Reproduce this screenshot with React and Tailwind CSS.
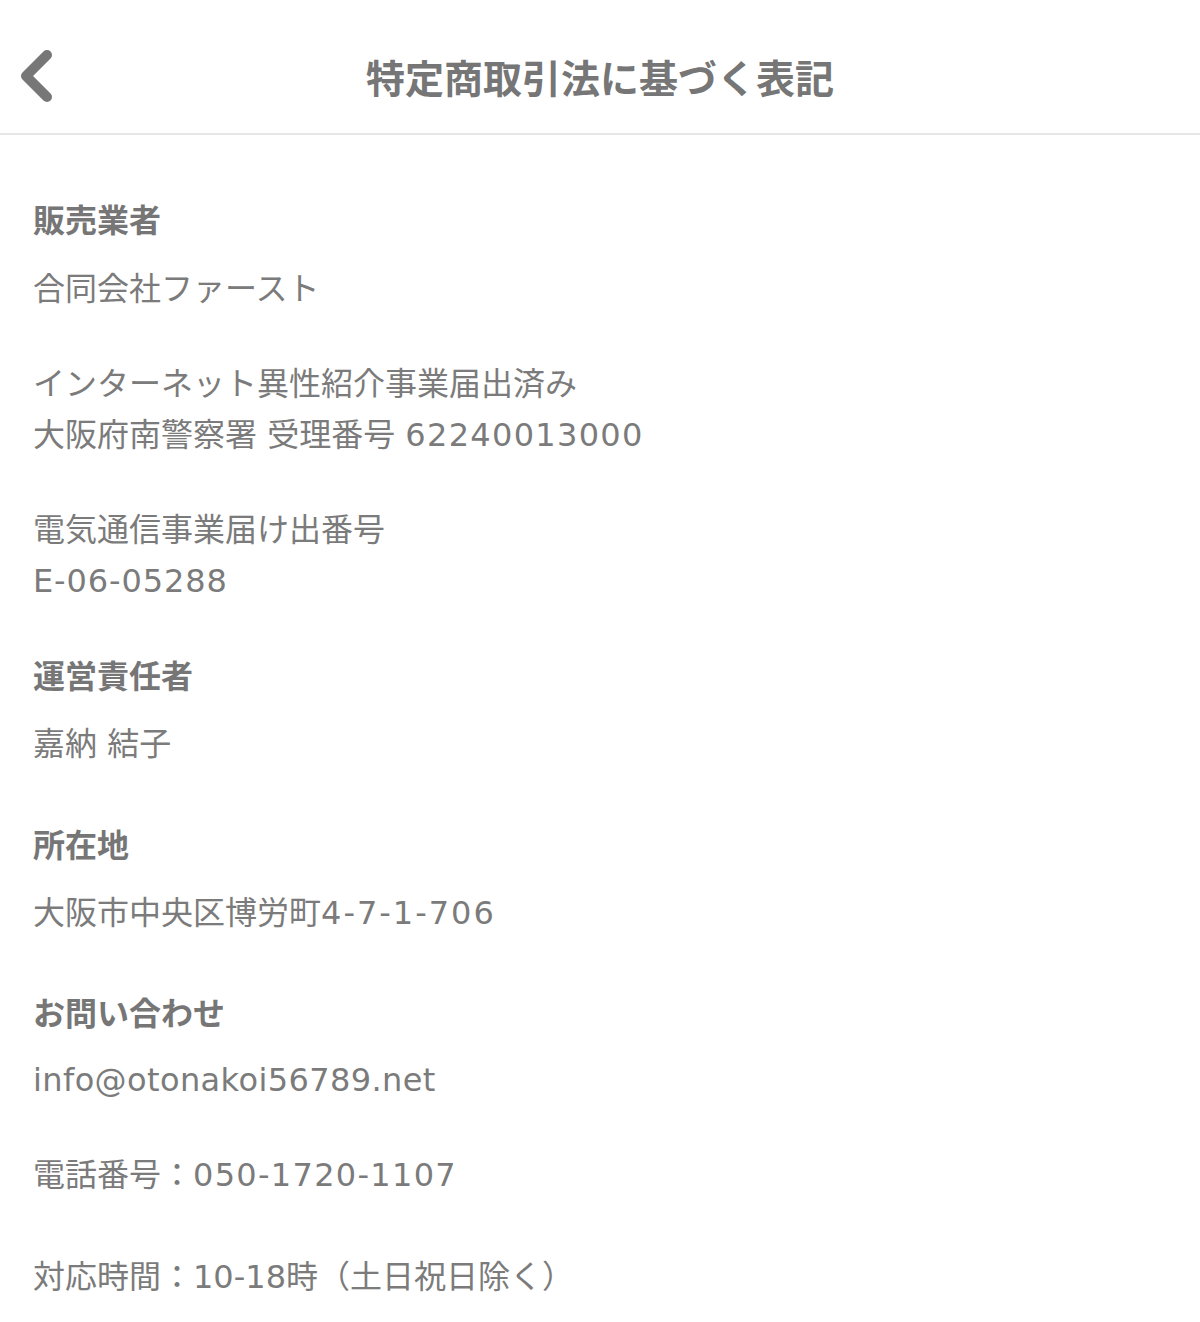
import React from "react";

const font = { fontFamily: '"Noto Sans CJK JP", "Noto Sans", sans-serif' };
const bodyFont = { fontFamily: '"DejaVu Sans", "Noto Sans CJK JP", sans-serif' };

function H({ children, className = "" }) {
  return (
    <h2 className={`text-[32px] leading-[51px] font-bold text-[#767676] ${className}`}>
      {children}
    </h2>
  );
}

function P({ children, className = "" }) {
  return (
    <p className={`text-[32px] leading-[51px] text-[#7b7b7b] ${className}`} style={bodyFont}>
      {children}
    </p>
  );
}

function N({ children }) {
  return <span className="tracking-[1.3px]">{children}</span>;
}

export default function App() {
  return (
    <div className="w-[1200px] min-h-[1322px] bg-white" style={font}>
      <header className="relative h-[135px] border-b-2 border-[#e8e5e7] flex items-center justify-center">
        <button className="absolute left-[17px] top-[49px] w-[40px] h-[54px] flex items-center justify-center">
          <svg width="40" height="54" viewBox="0 0 40 54">
            <path
              d="M30 6 L9 27 L30 48"
              fill="none"
              stroke="#777777"
              strokeWidth="10"
              strokeLinecap="round"
              strokeLinejoin="round"
            />
          </svg>
        </button>
        <h1 className="text-[39px] font-bold text-[#767676] pt-[20px]">
          特定商取引法に基づく表記
        </h1>
      </header>

      <main className="px-[33px] pt-[58px] pb-[20px]">
        <H>販売業者</H>
        <P className="mt-[20px]">合同会社ファースト</P>
        <P className="mt-[44px]">
          インターネット異性紹介事業届出済み
          <br />
          大阪府南警察署 受理番号 <N>62240013000</N>
        </P>
        <P className="mt-[44px]">
          電気通信事業届け出番号
          <br />
          <span className="tracking-[0.9px]">E-06-05288</span>
        </P>

        <H className="mt-[42px]">運営責任者</H>
        <P className="mt-[19px]">嘉納 結子</P>

        <H className="mt-[48px]">所在地</H>
        <P className="mt-[19px]">
          大阪市中央区博労町<span className="tracking-[2px]">4-7-1-706</span>
        </P>

        <H className="mt-[47px]">お問い合わせ</H>
        <P className="mt-[18px]">
          <span className="tracking-[0.4px]">info@otonakoi56789.net</span>
        </P>
        <P className="mt-[44px]">
          電話番号：<N>050-1720-1107</N>
        </P>
        <P className="mt-[51px]">対応時間：10-18時（土日祝日除く）</P>
      </main>
    </div>
  );
}
